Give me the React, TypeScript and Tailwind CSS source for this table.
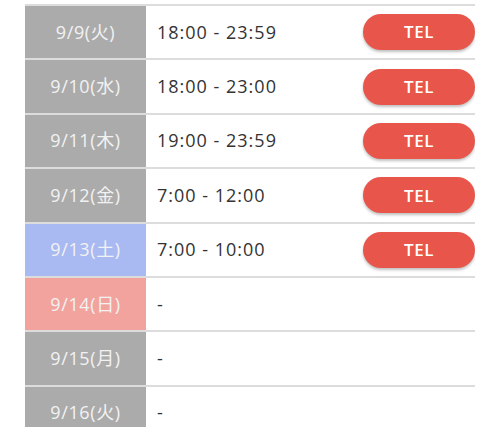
const rows = [
  { date: "9/9(火)", time: "18:00 - 23:59", tel: true, bg: "bg-[#ababab]" },
  { date: "9/10(水)", time: "18:00 - 23:00", tel: true, bg: "bg-[#ababab]" },
  { date: "9/11(木)", time: "19:00 - 23:59", tel: true, bg: "bg-[#ababab]" },
  { date: "9/12(金)", time: "7:00 - 12:00", tel: true, bg: "bg-[#ababab]" },
  { date: "9/13(土)", time: "7:00 - 10:00", tel: true, bg: "bg-[#a9b9f2]" },
  { date: "9/14(日)", time: "-", tel: false, bg: "bg-[#f3a39d]" },
  { date: "9/15(月)", time: "-", tel: false, bg: "bg-[#ababab]" },
  { date: "9/16(火)", time: "-", tel: false, bg: "bg-[#ababab]" },
];

export default function App() {
  return (
    <div
      className="w-[500px] h-[440px] bg-white pt-[4px]"
      style={{ fontFamily: '"Open Sans", "Noto Sans CJK JP", sans-serif' }}
    >
      <div className="mx-[25px] h-[423px] overflow-hidden">
        {rows.map((r) => (
          <div key={r.date} className="flex h-[54.4px] border-t-2 border-[#dcdcdc]">
            <div
              className={`${r.bg} w-[121px] shrink-0 flex items-center justify-center text-[18px] tracking-[0.6px] text-[#f2f2f2]`}
            >
              {r.date}
            </div>
            <div className="flex-1 flex items-center justify-between pl-[11px]">
              <span className="text-[18px] tracking-[1px] text-[#333]">{r.time}</span>
              {r.tel && (
                <button className="w-[112px] h-[36px] rounded-full bg-[#e8554a] text-white font-semibold text-[17px] tracking-[0.5px] shadow-[0_2px_3px_rgba(0,0,0,0.25)]">
                  TEL
                </button>
              )}
            </div>
          </div>
        ))}
      </div>
    </div>
  );
}
